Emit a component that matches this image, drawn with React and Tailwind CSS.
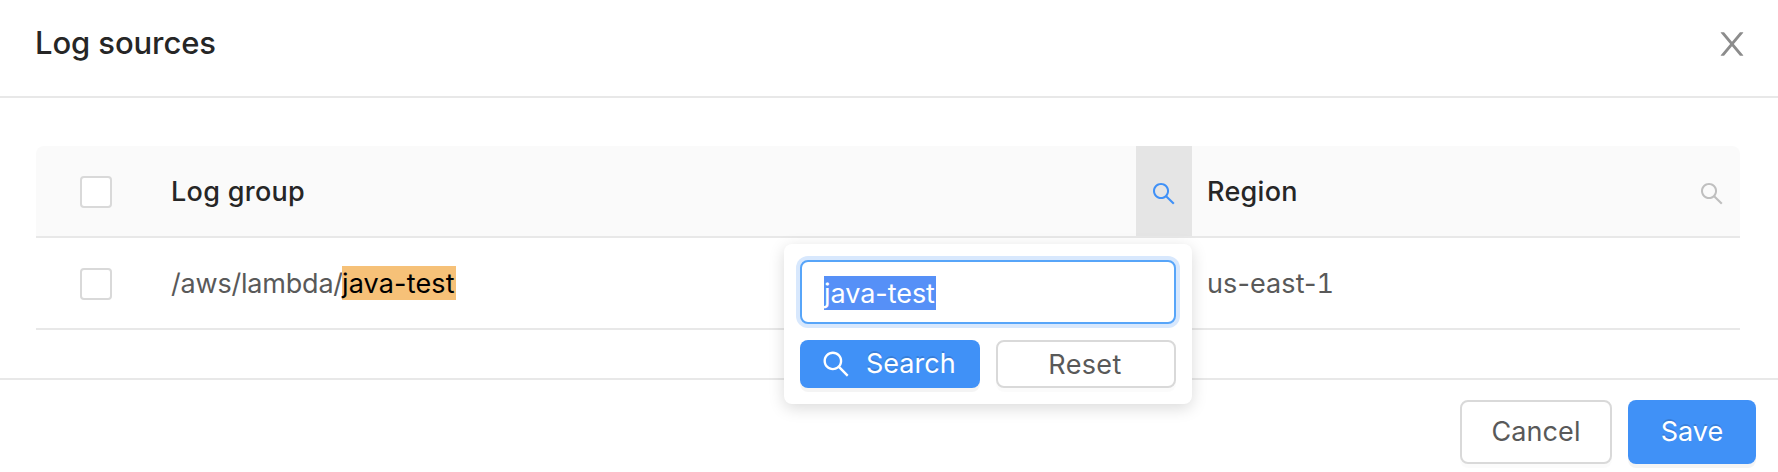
import { AiOutlineSearch } from "react-icons/ai";

function CloseIcon() {
  return (
    <svg viewBox="64 64 896 896" className="size-8" fill="currentColor" aria-hidden="true">
      <path d="M563.8 512l262.5-312.9c4.4-5.2.7-13.1-6.1-13.1h-79.8c-4.7 0-9.2 2.1-12.3 5.7L511.6 449.8 295.1 191.7c-3-3.6-7.5-5.7-12.3-5.7H203c-6.8 0-10.5 7.9-6.1 13.1L459.4 512 196.9 824.9A7.95 7.95 0 0 0 203 838h79.8c4.7 0 9.2-2.1 12.3-5.7l216.5-258.1 216.5 258.1c3 3.6 7.5 5.7 12.3 5.7h79.8c6.8 0 10.5-7.9 6.1-13.1L563.8 512z" />
    </svg>
  );
}

function Checkbox() {
  return <span className="block size-8 rounded-[4px] border-2 border-[#d9d9d9] bg-white" />;
}

function FilterPopover() {
  return (
    <div className="absolute top-[98px] right-0 z-10 flex w-[408px] flex-col gap-4 rounded-lg bg-white p-4 font-normal shadow-[0_4px_16px_rgba(0,0,0,0.15)]">
      <div className="flex h-16 items-center rounded-lg border-2 border-[#57a5f9] bg-white pl-[22px] shadow-[0_0_0_4px_#d8e8fd]">
        <span className="relative top-px h-[34px] w-28 bg-[#5690f7] text-[27px] leading-[36px] tracking-[-0.05px] whitespace-nowrap text-white">java-test</span>
      </div>
      <div className="flex gap-4">
        <button className="flex h-12 w-[180px] items-center rounded-lg bg-[#4091f7] pl-5 text-white shadow-[0_4px_0_rgba(0,0,0,0.045)] [text-shadow:0_-2px_0_rgba(0,0,0,0.12)]">
          <AiOutlineSearch className="size-8" />
          <span className="ml-3.5">Search</span>
        </button>
        <button className="h-12 w-[180px] rounded-lg border-2 border-[#d9d9d9] bg-white pr-0.5 leading-none tracking-[0.35px] text-[#595959] shadow-[0_4px_0_rgba(0,0,0,0.015)]">Reset</button>
      </div>
    </div>
  );
}

export default function App() {
  return (
    <div className="flex h-[472px] w-[1778px] flex-col overflow-hidden bg-white font-['Inter','Liberation_Sans',sans-serif] text-[27px] text-[#595959]">
      <header className="flex h-[98px] items-start justify-between border-b-2 border-[#e8e8e8] pt-[21px] pr-[30px] pl-[35px]">
        <h1 className="text-[31px] leading-[44px] font-medium tracking-[-0.1px] text-[#262626]">Log sources</h1>
        <button className="mt-[7px] text-[#8c8c8c]">
          <CloseIcon />
        </button>
      </header>

      <main className="h-[280px] px-9 pt-12">
        <div className="w-[1704px]">
          <div className="flex h-[92px] rounded-t-lg border-b-2 border-[#e8e8e8] bg-[#fafafa] font-medium text-[#262626]">
            <div className="flex w-[118px] items-center pt-0.5 pl-11">
              <Checkbox />
            </div>
            <div className="flex w-[982px] items-center pt-[3px] pl-[17px]">
              <span className="tracking-[0.3px]">Log group</span>
            </div>
            <div className="relative flex w-14 items-center justify-center bg-[#e5e5e5] pt-[6px] text-[#4091f7]">
              <AiOutlineSearch className="size-[27.4px]" />
              <FilterPopover />
            </div>
            <div className="flex flex-1 items-center justify-between pr-[14.5px] pl-[15px]">
              <span className="pt-[3px] tracking-[0.3px]">Region</span>
              <AiOutlineSearch className="mt-[6px] size-[27.4px] text-[#bfbfbf]" />
            </div>
          </div>

          <div className="flex h-[92px] items-center border-b-2 border-[#e8e8e8]">
            <div className="w-[118px] pt-0.5 pl-11">
              <Checkbox />
            </div>
            <div className="flex w-[1038px] items-center pl-[17px] leading-[34px]">
              <span className="w-[171px] pt-0.5 tracking-[-0.2px] whitespace-nowrap">/aws/lambda/</span>
              <span className="h-[34px] w-[114px] bg-[#f6c178] leading-[36px] tracking-[0.15px] whitespace-nowrap text-black">java-test</span>
            </div>
            <div className="pt-0.5 pl-[15px] tracking-[0.1px]">
              us-east-<span className="tabular-nums">1</span>
            </div>
          </div>
        </div>
      </main>

      <footer className="flex h-[94px] justify-end gap-4 border-t-2 border-[#e8e8e8] pt-5 pr-[22px]">
        <button className="h-16 w-[152px] rounded-lg border-2 border-[#d9d9d9] bg-white tracking-[0.1px] shadow-[0_4px_0_rgba(0,0,0,0.015)]">Cancel</button>
        <button className="h-16 w-32 rounded-lg bg-[#4091f7] text-white shadow-[0_4px_0_rgba(0,0,0,0.045)] [text-shadow:0_-2px_0_rgba(0,0,0,0.12)]">Save</button>
      </footer>
    </div>
  );
}
